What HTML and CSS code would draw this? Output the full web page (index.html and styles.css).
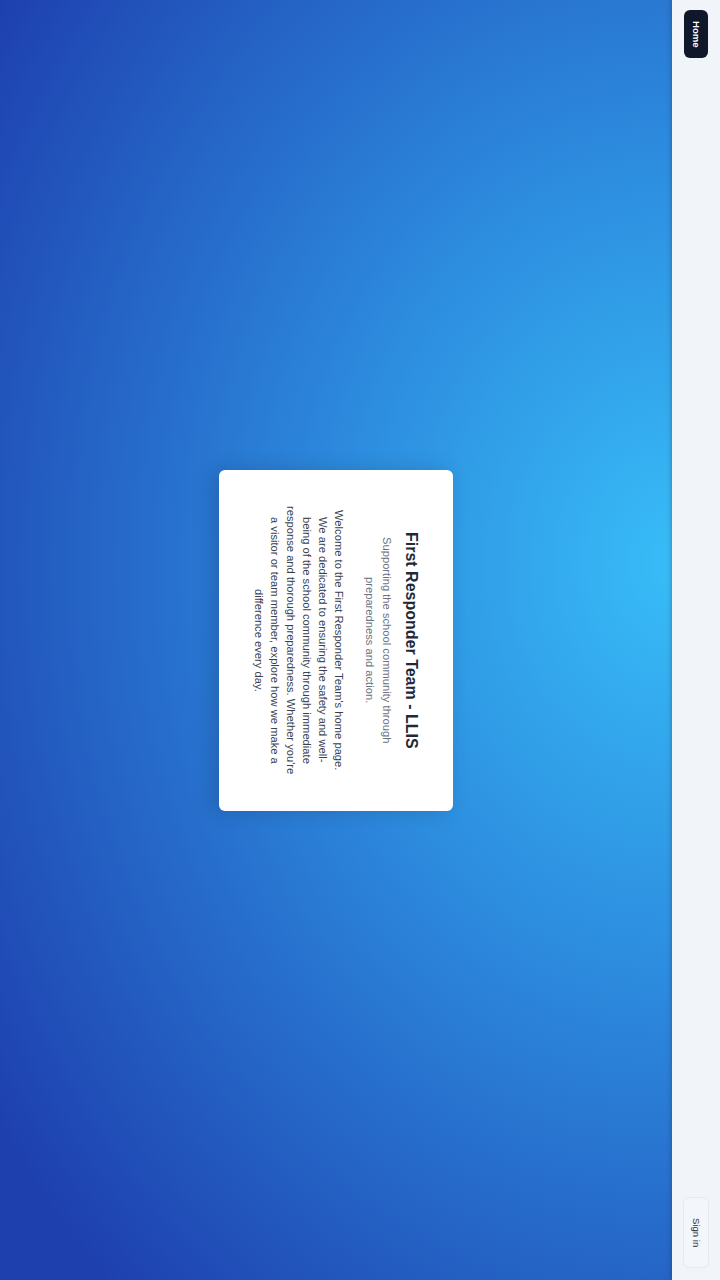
FILE: index.html
```html
<!DOCTYPE html>
<html lang="en">
<head>
<meta charset="utf-8">
<title>First Responder Team - LLIS</title>
<link rel="stylesheet" href="styles.css">
</head>
<body>
<div class="page">
  <header class="nav">
    <a class="btn-home" href="#">Home</a>
    <a class="btn-signin" href="#">Sign in</a>
  </header>
  <main class="main">
    <section class="card">
      <h1 class="title">First Responder Team - LLIS</h1>
      <p class="subtitle">Supporting the school community through preparedness and action.</p>
      <p class="body">Welcome to the First Responder Team's home page. We are dedicated to ensuring the safety and well-being of the school community through immediate response and thorough preparedness. Whether you're a visitor or team member, explore how we make a difference every day.</p>
    </section>
  </main>
</div>
</body>
</html>
```
FILE: styles.css
```css
html {
  writing-mode: vertical-rl;
}

html, body {
  margin: 0;
  padding: 0;
  width: 720px;
  height: 1280px;
  overflow: hidden;
}

.page {
  width: 720px;
  height: 1280px;
  display: flex;
  flex-direction: column;
  font-family: "Liberation Sans", Arial, sans-serif;
  background: radial-gradient(ellipse 820px 1000px at 94% 44%, #38bdf8 0%, #2d8ddf 40%, #1e40af 100%);
}

.nav {
  block-size: 48px;
  flex: none;
  background: #f1f5f9;
  display: flex;
  align-items: center;
  justify-content: space-between;
  padding-inline: 10px 12px;
  box-shadow: -1px 0 4px rgba(15, 23, 42, 0.25);
  position: relative;
  z-index: 1;
}

.btn-home {
  inline-size: 48px;
  block-size: 24px;
  border-radius: 6px;
  background: #0f172a;
  color: #ffffff;
  font-size: 9.6px;
  font-weight: 700;
  text-decoration: none;
  display: flex;
  align-items: center;
  justify-content: center;
}

.btn-signin {
  inline-size: 71px;
  block-size: 26px;
  box-sizing: border-box;
  border: 1px solid #e6ebf1;
  border-radius: 6px;
  background: #f3f6fa;
  color: #1f2937;
  font-size: 9.6px;
  text-decoration: none;
  display: flex;
  align-items: center;
  justify-content: center;
}

.main {
  flex: 1;
  display: flex;
  align-items: center;
  justify-content: center;
}

.card {
  inline-size: 341px;
  box-sizing: border-box;
  padding-block: 30px 32px;
  padding-inline: 35px;
  background: #ffffff;
  border-radius: 6px;
  box-shadow: -6px 0 20px rgba(15, 23, 42, 0.18);
  text-align: center;
}

.title {
  margin: 0;
  font-size: 16px;
  line-height: 24px;
  font-weight: 700;
  color: #1f2937;
}

.subtitle {
  margin-block: 4px 0;
  margin-inline: 0;
  font-size: 11.2px;
  line-height: 17px;
  color: #6b7280;
}

.body {
  margin-block: 14px 0;
  margin-inline: 0;
  font-size: 11.2px;
  line-height: 16px;
  color: #374151;
}
```
